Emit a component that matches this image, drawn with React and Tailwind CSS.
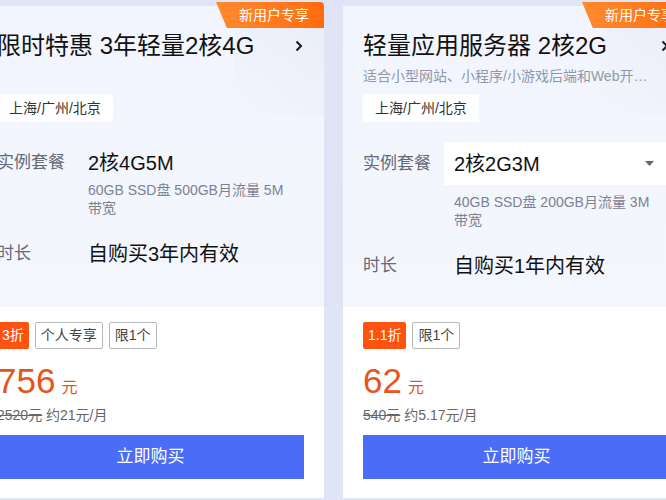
import React from 'react';

const cards = [
  {
    title: '限时特惠 3年轻量2核4G',
    subtitle: '',
    region: '上海/广州/北京',
    spec: '2核4G5M',
    select: false,
    desc: '60GB SSD盘 500GB月流量 5M 带宽',
    duration: '自购买3年内有效',
    discount: '3折',
    tags: ['个人专享', '限1个'],
    price: '756',
    original: '2520元',
    monthly: '约21元/月',
  },
  {
    title: '轻量应用服务器 2核2G',
    subtitle: '适合小型网站、小程序/小游戏后端和Web开发测试环境',
    region: '上海/广州/北京',
    spec: '2核2G3M',
    select: true,
    desc: '40GB SSD盘 200GB月流量 3M 带宽',
    duration: '自购买1年内有效',
    discount: '1.1折',
    tags: ['限1个'],
    price: '62',
    original: '540元',
    monthly: '约5.17元/月',
  },
];

const Chevron = () => (
  <svg width="10" height="14" viewBox="0 0 10 14" fill="none">
    <path d="M2.5 2.5l4.5 4.5-4.5 4.5" stroke="#1a1a1a" strokeWidth="2" />
  </svg>
);

const Card = ({ c }) => (
  <div className="relative w-[347px] h-[492px] shrink-0 bg-white flex flex-col">
    <div className="absolute -top-[4px] right-0 w-[108px] h-[26px] rounded-tr-[4px] bg-gradient-to-r from-[#ff8a2e] to-[#ff6c0a] [clip-path:polygon(0_0,100%_0,100%_100%,10%_100%)] flex items-center justify-center pl-[8px] text-[14px] text-white z-10">
      新用户专享
    </div>
    <div className="h-[301px] px-5 pt-[26px] bg-gradient-to-b from-[#f2f5fd] to-[#f4f6fd] relative overflow-hidden">
      <div className="absolute right-[-20px] top-[20px] w-[110px] h-[90px] rounded-[16px] bg-gradient-to-bl from-[#e6eaf7] to-transparent opacity-70" />
      <div className="relative flex items-center justify-between h-[28px]">
        <span className="text-[24px] text-[#111] leading-[28px] whitespace-nowrap">{c.title}</span>
        <Chevron />
      </div>
      <div className="relative mt-[6px] w-[292px] h-[20px] text-[14px] leading-[20px] text-[#8f98ab] truncate">{c.subtitle}</div>
      <div className="relative mt-[8px] inline-flex items-center h-[28px] px-[12px] bg-white text-[14px] text-[#333]">{c.region}</div>
      {c.select ? (
        <div className="mt-[20px] flex items-center h-[43px]">
          <span className="w-[81px] text-[17px] text-[#636a78]">实例套餐</span>
          <div className="flex-1 h-[43px] bg-white flex items-center justify-between pl-[10px] pr-[16px]">
            <span className="text-[20px] text-[#111]">{c.spec}</span>
            <svg width="9" height="5" viewBox="0 0 9 5"><path d="M0 0h9L4.5 5z" fill="#666" /></svg>
          </div>
        </div>
      ) : (
        <div className="mt-[28px] flex items-center h-[26px]">
          <span className="w-[81px] text-[17px] text-[#636a78]">实例套餐</span>
          <span className="pl-[10px] text-[20px] text-[#111]">{c.spec}</span>
        </div>
      )}
      <div className={`${c.select ? 'mt-[8px]' : 'mt-[5px]'} pl-[91px] pr-[10px] text-[14px] leading-[18px] text-[#7b8294]`}>{c.desc}</div>
      <div className="mt-[24px] flex items-center h-[26px]">
        <span className="w-[81px] text-[17px] text-[#636a78]">时长</span>
        <span className="pl-[10px] text-[20px] text-[#111]">{c.duration}</span>
      </div>
    </div>
    <div className="flex-1 px-5 pt-[15px]">
      <div className="flex items-center gap-[6px]">
        <span className="h-[27px] px-[5px] flex items-center rounded-[2px] bg-[#ff520f] text-white text-[14px]">{c.discount}</span>
        {c.tags.map(t => (
          <span key={t} className="h-[27px] px-[5px] flex items-center rounded-[2px] border border-[#b8b8b8] text-[#444] text-[14px]">{t}</span>
        ))}
      </div>
      <div className="mt-[12px] flex items-baseline gap-[6px] text-[#e5561c]">
        <span className="text-[35px] leading-[40px]">{c.price}</span>
        <span className="text-[16px]">元</span>
      </div>
      <div className="mt-[4px] text-[14px] leading-[20px] text-[#666]">
        <span className="line-through">{c.original}</span> {c.monthly}
      </div>
      <button className="mt-[10px] w-full h-[44px] bg-[#4b6cf7] text-white text-[17px]">立即购买</button>
    </div>
  </div>
);

export default function App() {
  return (
    <div className="w-[666px] h-[500px] overflow-hidden bg-[#dfe5f6] font-['Liberation_Sans','Noto_Sans_CJK_SC',sans-serif]">
      <div className="flex gap-[19px] ml-[-23px] pt-[6px]">
        {cards.map((c, i) => <Card key={i} c={c} />)}
      </div>
    </div>
  );
}
